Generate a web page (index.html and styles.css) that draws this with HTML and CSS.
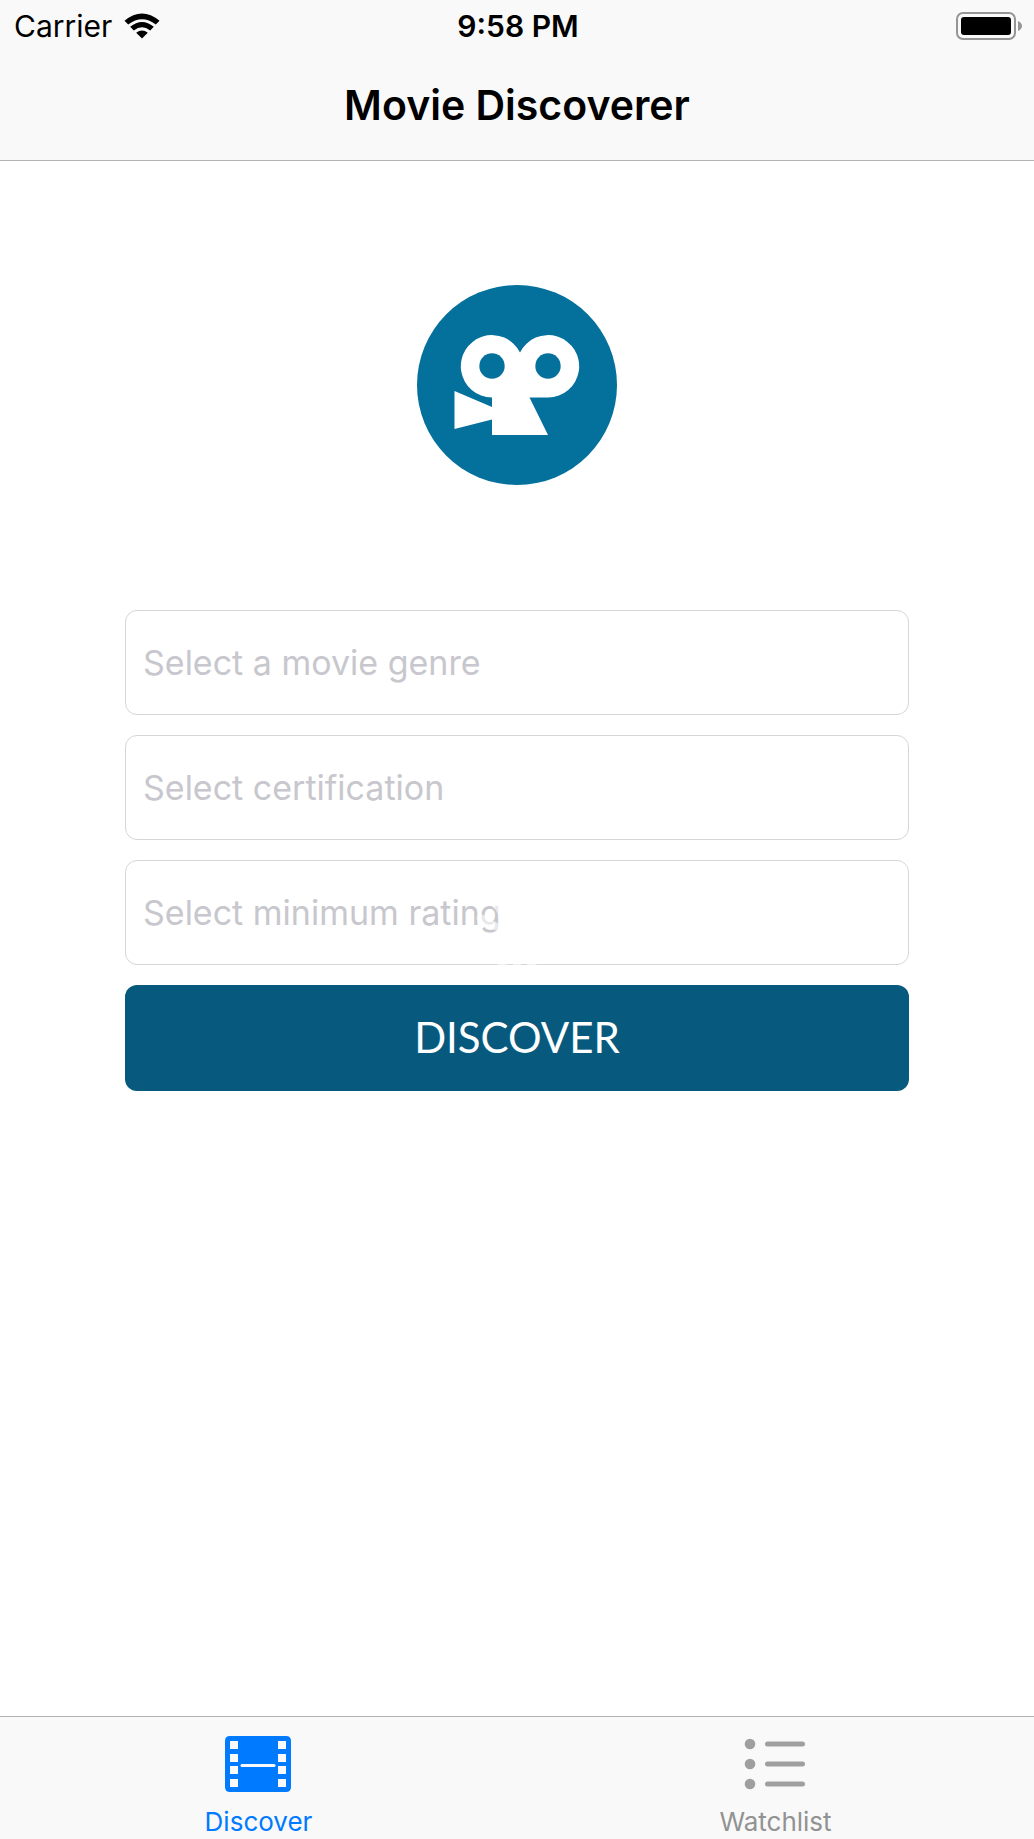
FILE: index.html
```html
<!DOCTYPE html>
<html lang="en">
<head>
  <meta charset="utf-8">
  <meta name="viewport" content="width=device-width, initial-scale=1">
  <title>Movie Discoverer</title>
  <link rel="stylesheet" href="styles.css">
</head>
<body>
  <header class="top">
    <div class="status">
      <div class="carrier">
        <span>Carrier</span>
        <svg class="wifi" viewBox="0 0 36 26" aria-hidden="true">
          <path d="M0.5 7.8Q18-6.8 35.5 7.8L31.8 11.6Q18 0.8 4.2 11.6Z"/>
          <path d="M6.2 13.8Q18 4 29.8 13.8L26.2 17.4Q18 11.200 9.800 17.4Z"/>
          <path d="M12.2 19.800Q18 15.2 23.800 19.800L18 25.4Z"/>
        </svg>
      </div>
      <time class="clock">9:58 PM</time>
      <svg class="battery" viewBox="0 0 66 28" aria-hidden="true">
        <rect x="1" y="1" width="58" height="26" rx="6" fill="none" stroke="#959595" stroke-width="2"/>
        <rect x="5" y="5" width="50" height="18" rx="3"/>
        <path d="M62 9q4 2 4 5t-4 5z" fill="#959595"/>
      </svg>
    </div>
    <h1 class="title">Movie Discoverer</h1>
  </header>

  <main class="content">
    <svg class="logo" viewBox="0 0 200 200" role="img" aria-label="Movie camera">
      <circle cx="100" cy="100" r="100" fill="#04709c"/>
      <path fill="#fff" d="M75 112.500A31.200 31.200 0 1 1 103 67.500A31.200 31.200 0 1 1 131 112.500H112.500L131 150H75V134.500L37.500 144V106L75 122Z"/>
      <circle cx="75" cy="81" r="12.700" fill="#04709c"/>
      <circle cx="131" cy="81" r="12.700" fill="#04709c"/>
    </svg>
    <form class="search">
      <input class="field" type="text" placeholder="Select a movie genre" aria-label="Movie genre">
      <input class="field" type="text" placeholder="Select certification" aria-label="Certification">
      <input class="field" type="text" placeholder="Select minimum rating" aria-label="Minimum rating">
      <button class="submit" type="button">DISCOVER</button>
    </form>
    <!-- White activity spinner, centred over the screen -->
    <svg class="spinner" viewBox="-48 -48 96 96" aria-hidden="true">
      <g stroke="#fff" stroke-width="8" stroke-linecap="round">
        <path d="M0-42V-26M0 42V26M-42 0H-26M42 0H26"/>
        <path d="M0-42V-26M0 42V26M-42 0H-26M42 0H26" transform="rotate(30)"/>
        <path d="M0-42V-26M0 42V26M-42 0H-26M42 0H26" transform="rotate(60)"/>
      </g>
    </svg>
  </main>

  <nav class="tabs">
    <a class="tab tab-active" href="#discover" aria-current="page">
      <svg class="tab-icon" viewBox="0 0 68 56" aria-hidden="true">
        <path fill="currentColor" fill-rule="evenodd" d="M5 0H61Q66 0 66 5V51Q66 56 61 56H5Q0 56 0 51V5Q0 0 5 0ZM5 5V13H13V5ZM5 18V26H13V18ZM5 30V38H13V30ZM5 43V51H13V43ZM53 5V13H61V5ZM53 18V26H61V18ZM53 30V38H61V30ZM53 43V51H61V43Z"/>
        <path d="M17 29.500H49" stroke="#f9f9f9" stroke-width="3" stroke-linecap="round"/>
      </svg>
      <span>Discover</span>
    </a>
    <a class="tab" href="#watchlist">
      <svg class="tab-icon" viewBox="0 0 68 56" aria-hidden="true">
        <g fill="#9f9f9f"><circle cx="8" cy="8" r="5.300"/><circle cx="8" cy="28" r="5.300"/><circle cx="8" cy="48" r="5.300"/></g>
        <path d="M25.500 8H60.500M25.500 28H60.500M25.500 48H60.500" stroke="#9f9f9f" stroke-width="5" stroke-linecap="round"/>
      </svg>
      <span>Watchlist</span>
    </a>
  </nav>
</body>
</html>
```
FILE: styles.css
```css
* { box-sizing: border-box; }

body {
  margin: 0;
  min-height: 100vh;
  display: flex;
  flex-direction: column;
  background: #fff;
  color: #000;
  font-family: Inter, "Liberation Sans", sans-serif;
}

.top {
  background: #f9f9f9;
  border-bottom: 1px solid #b2b2b2;
}

.status {
  display: grid;
  grid-template-columns: 1fr auto 1fr;
  align-items: center;
  height: 51px;
  padding: 0 12px 0 14px;
  font-size: 30px;
}

.carrier {
  display: flex;
  align-items: center;
  gap: 12px;
}

.wifi { width: 36px; height: 26px; }

.clock { font-weight: 600; }

.battery {
  width: 66px;
  height: 28px;
  justify-self: end;
}

.title {
  margin: 0;
  padding: 30px 0 31px;
  font-size: 41px;
  line-height: 48px;
  font-weight: 600;
  text-align: center;
}

.content {
  position: relative;
  flex: 1;
  display: flex;
  flex-direction: column;
  align-items: center;
  gap: 125px;
  padding: 124px 125px;
}

.logo { width: 200px; height: 200px; }

.search {
  width: 100%;
  display: flex;
  flex-direction: column;
  gap: 20px;
}

.field,
.submit {
  width: 100%;
  height: 105px;
  border-radius: 12px;
  font-family: inherit;
}

.field {
  padding: 0 17px;
  border: 1px solid #d6d6d6;
  background: #fff;
  color: #000;
  font-size: 34px;
}

.field::placeholder { color: #c7c7cd; opacity: 1; }

.submit {
  height: 106px;
  padding: 0 0 2px;
  border: 0;
  background: #075a7d;
  color: #fff;
  font-family: Lato, sans-serif;
  font-weight: 400;
  font-size: 42px;
}

.spinner {
  position: absolute;
  inset: 0;
  width: 96px;
  height: 96px;
  margin: auto;
  opacity: 0.6;
  pointer-events: none;
}

.tabs {
  display: grid;
  grid-template-columns: 1fr 1fr;
  background: #f9f9f9;
  border-top: 1px solid #b2b2b2;
}

.tab {
  display: flex;
  flex-direction: column;
  align-items: center;
  gap: 13px;
  padding: 19px 0 1px;
  color: #929292;
  font-size: 26px;
  line-height: 33px;
  text-decoration: none;
}

.tab-active { color: #007aff; }

.tab-icon { width: 68px; height: 56px; }
```
